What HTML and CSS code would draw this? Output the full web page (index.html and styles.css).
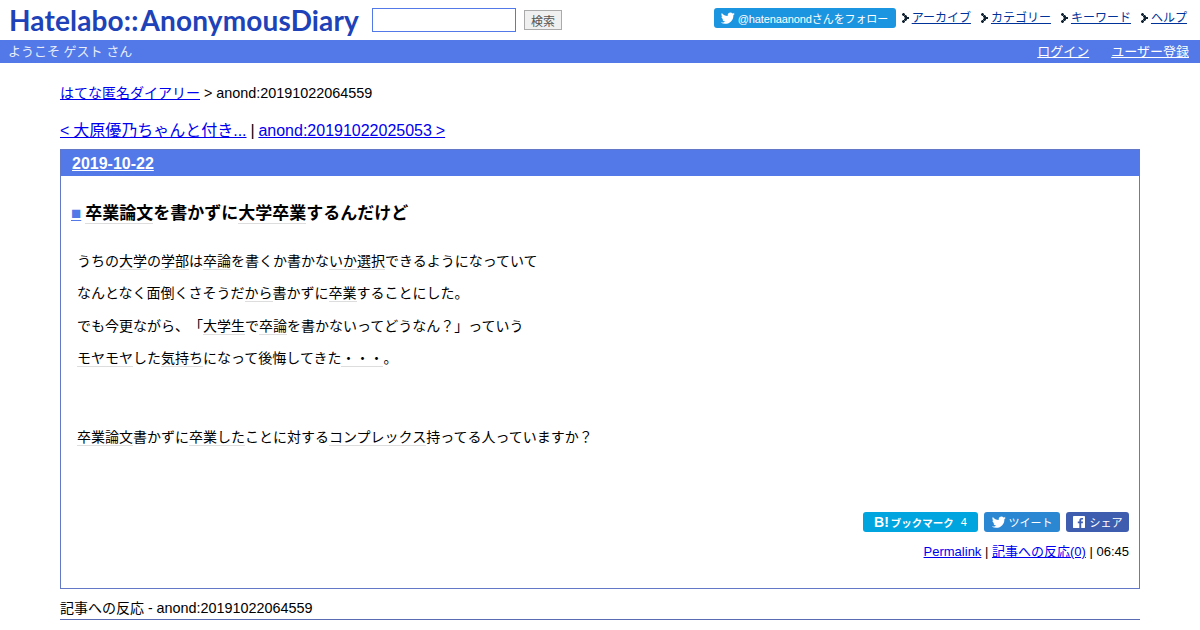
FILE: index.html
```html
<!DOCTYPE html>
<html lang="ja">
<head>
    <meta charset="UTF-8">
    <title>卒業論文を書かずに大学卒業するんだけど</title>
    <link rel="stylesheet" href="styles.css">
</head>
<body>

<div class="top">
    <div class="top-left">
        <a class="logo" href="#">Hatelabo::<span class="logo-word">AnonymousDiary</span></a>
        <input class="search" type="text">
        <button class="search-btn">検索</button>
    </div>
    <div class="top-right">
        <a class="follow" href="#">
            <svg class="bird" viewBox="0 0 24 24"><path d="M23.6 4.9c-.9.4-1.8.6-2.8.8 1-.6 1.800-1.600 2.100-2.700-.9.600-2 1-3.100 1.200C18.900 3.200 17.600 2.600 16.300 2.600c-2.700 0-4.900 2.200-4.900 4.900 0 .4 0 .8.100 1.100C7.400 8.400 3.800 6.400 1.400 3.400 1 4.100.7 5 .7 5.900c0 1.700.9 3.200 2.200 4.100-.8 0-1.600-.2-2.200-.6v.1c0 2.400 1.700 4.400 3.900 4.800-.4.100-.8.200-1.300.2-.3 0-.6 0-.9-.1.600 2 2.400 3.400 4.600 3.400-1.700 1.300-3.800 2.100-6.100 2.100-.4 0-.8 0-1.200-.1 2.200 1.400 4.800 2.200 7.500 2.200 9 0 14-7.500 14-14v-.6c1-.7 1.800-1.600 2.400-2.500z"/></svg>
            @hatenaanondさんをフォロー
        </a>
        <a class="nav" href="#">アーカイブ</a>
        <a class="nav" href="#">カテゴリー</a>
        <a class="nav" href="#">キーワード</a>
        <a class="nav" href="#">ヘルプ</a>
    </div>
</div>

<div class="userbar">
    <span>ようこそ ゲスト さん</span>
    <div class="userbar-links">
        <a href="#">ログイン</a>
        <a href="#">ユーザー登録</a>
    </div>
</div>

<div class="main">
    <div class="breadcrumb"><a href="#">はてな匿名ダイアリー</a> <span class="page-id">&gt; anond:20191022064559</span></div>
    <div class="pager"><a href="#">&lt; 大原優乃ちゃんと付き...</a> | <a href="#">anond:20191022025053 &gt;</a></div>

    <div class="day">
        <h2 class="day-head"><a href="#">2019-10-22</a></h2>
        <div class="section">
            <h3 class="title"><a class="square" href="#">■</a> <a class="kw" href="#">卒業論文</a>を書かずに<a class="kw" href="#">大学</a><a class="kw" href="#">卒業</a>するんだけど</h3>
            <p>うちの<a class="kw" href="#">大学</a>の<a class="kw" href="#">学部</a>は<a class="kw" href="#">卒論</a>を書くか書かな<a class="kw" href="#">いか</a><a class="kw" href="#">選択</a>できるようになっていて</p>
            <p>なんとなく面倒くさそうだ<a class="kw" href="#">から</a>書かずに<a class="kw" href="#">卒業</a>することにした。</p>
            <p>でも今更ながら、「<a class="kw" href="#">大学生</a>で<a class="kw" href="#">卒論</a>を書かないってどうなん？」っていう</p>
            <p><a class="kw" href="#">モヤモヤ</a>した<a class="kw" href="#">気持ち</a>になって後悔してきた<a class="kw" href="#">・・・</a>。</p>
            <p class="blank">&nbsp;</p>
            <p><a class="kw" href="#">卒業論文</a>書かずに<a class="kw" href="#">卒業</a><a class="kw" href="#">した</a>ことに対する<a class="kw" href="#">コンプレックス</a>持ってる人っていますか？</p>
            <div class="share">
                <a class="share-btn hb" href="#"><b class="hb-mark">B!</b><b class="hb-label">ブックマーク</b><span class="hb-count">4</span></a>
                <a class="share-btn tw" href="#">
                    <svg class="bird" viewBox="0 0 24 24"><path d="M23.6 4.9c-.9.4-1.8.6-2.8.8 1-.6 1.800-1.600 2.100-2.700-.9.600-2 1-3.100 1.200C18.900 3.200 17.600 2.600 16.300 2.600c-2.700 0-4.900 2.200-4.900 4.900 0 .4 0 .8.100 1.100C7.400 8.400 3.800 6.400 1.400 3.400 1 4.100.7 5 .7 5.900c0 1.700.9 3.200 2.200 4.100-.8 0-1.600-.2-2.200-.6v.1c0 2.400 1.700 4.400 3.900 4.800-.4.100-.8.200-1.300.2-.3 0-.6 0-.9-.1.600 2 2.400 3.400 4.600 3.400-1.700 1.300-3.800 2.100-6.100 2.100-.4 0-.8 0-1.200-.1 2.200 1.400 4.800 2.200 7.500 2.200 9 0 14-7.500 14-14v-.6c1-.7 1.800-1.600 2.400-2.500z"/></svg>
                    ツイート
                </a>
                <a class="share-btn fb" href="#">
                    <svg class="fb-icon" viewBox="0 0 14 14"><path fill="#fff" d="M1 0h12a1 1 0 0 1 1 1v12a1 1 0 0 1-1 1H9.600V8.600h1.800l.3-2.100H9.600V5.200c0-.6.200-1 1-1h1.100V2.300c-.2 0-.9-.1-1.600-.1-1.600 0-2.700 1-2.700 2.800v1.500H5.600v2.100h1.800V14H1a1 1 0 0 1-1-1V1a1 1 0 0 1 1-1z"/></svg>
                    シェア
                </a>
            </div>
            <div class="meta"><a href="#">Permalink</a> | <a href="#">記事への反応(0)</a> | 06:45</div>
        </div>
    </div>

    <div class="refs">記事への反応 - <span class="page-id">anond:20191022064559</span></div>
</div>

</body>
</html>
```

FILE: styles.css
```css
html, body {
    height: 630px;
    overflow: hidden;
}
body {
    margin: 0;
    background-color: #fff;
    color: #000;
    font-family: "Liberation Sans", Arial, "Noto Sans CJK JP", sans-serif;
    font-size: 14px;
    text-spacing-trim: space-all;
}
a {
    color: #00e;
}
.top {
    display: flex;
    justify-content: space-between;
    height: 40px;
    padding: 0 13px 0 9px;
}
.top-left {
    display: flex;
    align-items: center;
}
.logo {
    width: 349px;
    margin-right: 14px;
    color: #2042b8;
    font-family: "Lato", sans-serif;
    font-size: 28px;
    font-weight: bold;
    line-height: 40px;
    letter-spacing: .15px;
    white-space: nowrap;
    text-decoration: none;
}
.logo-word {
    margin-left: 2px;
}
.search {
    box-sizing: border-box;
    width: 144px;
    height: 24px;
    margin: 0 8px 0 0;
    border: 1px solid #5279e7;
}
.search-btn {
    box-sizing: border-box;
    width: 38px;
    height: 20px;
    padding: 0;
    border: 1px solid #aaa;
    background-color: #f0f0f0;
    color: #555;
    font-size: 12px;
    font-family: inherit;
}
.top-right {
    display: flex;
    align-items: flex-start;
    padding-top: 8px;
    font-size: 12px;
}
.follow {
    display: flex;
    align-items: center;
    gap: 3px;
    box-sizing: border-box;
    width: 182px;
    height: 20px;
    margin-right: 6px;
    padding-left: 7px;
    border-radius: 3px;
    background-color: #1b95e0;
    color: #fff;
    font-size: 11px;
    letter-spacing: -.1px;
    text-decoration: none;
}
.bird {
    width: 14px;
    height: 14px;
    fill: #fff;
}
.nav {
    position: relative;
    margin-right: 10px;
    padding-left: 10px;
    color: #039;
    line-height: 20px;
}
/* dotted arrow in front of each menu item */
.nav::before {
    content: "";
    position: absolute;
    left: 0;
    top: 5px;
    width: 7px;
    height: 10px;
    background:
        radial-gradient(circle at 1.500px 1.500px, #123 1.300px, transparent 1.500px) 0 0 / 7px 10px no-repeat,
        radial-gradient(circle at 3.500px 3.500px, #123 1.300px, transparent 1.500px) 0 0 / 7px 10px no-repeat,
        radial-gradient(circle at 5.500px 5px, #123 1.300px, transparent 1.500px) 0 0 / 7px 10px no-repeat,
        radial-gradient(circle at 3.500px 6.500px, #123 1.300px, transparent 1.500px) 0 0 / 7px 10px no-repeat,
        radial-gradient(circle at 1.500px 8.500px, #123 1.300px, transparent 1.500px) 0 0 / 7px 10px no-repeat;
}
.nav:last-child {
    margin-right: 0;
}
.userbar {
    display: flex;
    justify-content: space-between;
    align-items: center;
    box-sizing: border-box;
    height: 23px;
    padding: 0 11px 2px 8px;
    background-color: #5279e7;
    color: #e8edfb;
    font-size: 13px;
}
.userbar-links {
    display: flex;
    gap: 22px;
}
.userbar-links a {
    color: #fff;
}
.main {
    padding: 0 60px;
}
.breadcrumb {
    margin-top: 21px;
    line-height: 18px;
}
.page-id {
    font-size: 14.4px;
}
.pager {
    margin-top: 19px;
    font-size: 16px;
    line-height: 19px;
    word-spacing: -.6px;
}
.day {
    box-sizing: border-box;
    height: 440px;
    margin-top: 9px;
    border: 1px solid #6478c8;
}
.day-head {
    height: 26px;
    margin: 0;
    padding-left: 11px;
    background-color: #5279e7;
    font-size: 16px;
    line-height: 28px;
}
.day-head a {
    color: #fff;
}
.section {
    padding: 0 10px;
}
.title {
    margin: 27px 0 0;
    font-size: 17px;
    line-height: 22px;
    word-spacing: -.7px;
}
.square {
    color: #5279e7;
}
.kw {
    color: inherit;
    text-decoration: none;
    border-bottom: 1px solid #ddd;
}
.section p {
    margin: 0 0 0 6px;
    line-height: 32.3px;
}
.section .title + p {
    margin-top: 20px;
}
.section p.blank {
    height: 47px;
}
.share {
    display: flex;
    justify-content: flex-end;
    gap: 6px;
    margin-top: 59px;
}
.share-btn {
    display: flex;
    align-items: center;
    justify-content: center;
    height: 20px;
    border-radius: 3px;
    color: #fff;
    font-size: 11px;
    text-decoration: none;
}
.hb {
    width: 115px;
    background-color: #00a4de;
}
.hb-mark {
    margin-right: 2px;
    font-size: 14px;
}
.hb-label {
    font-size: 10.500px;
}
.hb-count {
    margin-left: 7px;
}
.tw {
    width: 76px;
    gap: 3px;
    background-color: #2c87d2;
}
.fb {
    width: 63px;
    gap: 5px;
    background-color: #3e5daf;
}
.fb-icon {
    width: 12px;
    height: 12px;
}
.meta {
    margin-top: 11px;
    font-size: 13px;
    text-align: right;
    line-height: 18px;
}
.refs {
    margin-top: 10px;
    padding-bottom: 2px;
    border-bottom: 1px solid #5a6cb4;
    line-height: 18px;
}
```
